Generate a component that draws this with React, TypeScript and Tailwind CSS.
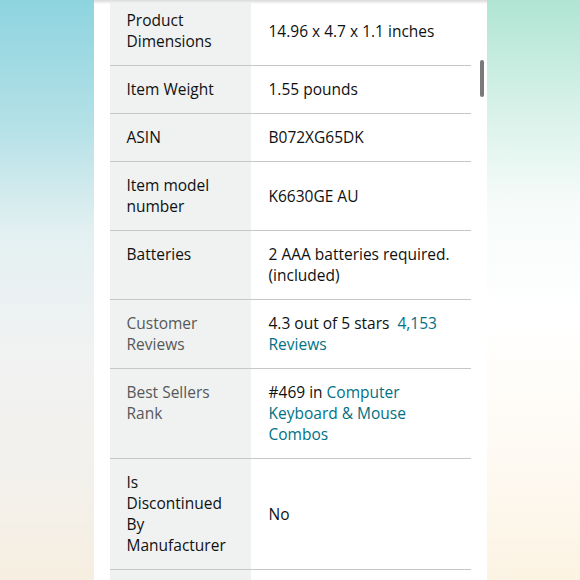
import React from "react";

type Row = {
  label: string[];
  muted?: boolean;
  value: React.ReactNode;
};

const link = "text-[#007185]";

const rows: Row[] = [
  { label: ["Product", "Dimensions"], value: "14.96 x 4.7 x 1.1 inches" },
  { label: ["Item Weight"], value: "1.55 pounds" },
  { label: ["ASIN"], value: "B072XG65DK" },
  { label: ["Item model", "number"], value: "K6630GE AU" },
  {
    label: ["Batteries"],
    value: (
      <>
        2 AAA batteries required.
        <br />
        (included)
      </>
    ),
  },
  {
    label: ["Customer", "Reviews"],
    muted: true,
    value: (
      <>
        4.3 out of 5 stars&nbsp;&nbsp;<span className={link}>4,153</span>
        <br />
        <span className={link}>Reviews</span>
      </>
    ),
  },
  {
    label: ["Best Sellers", "Rank"],
    muted: true,
    value: (
      <>
        #469 in <span className={link}>Computer</span>
        <br />
        <span className={link}>Keyboard &amp; Mouse</span>
        <br />
        <span className={link}>Combos</span>
      </>
    ),
  },
  { label: ["Is", "Discontinued", "By", "Manufacturer"], value: "No" },
];

const App = () => {
  return (
    <div className="w-[580px] h-[580px] overflow-hidden flex font-['Open_Sans',sans-serif] text-[15.5px] leading-[21px] text-[#0f1111]">
      {/* blurred backdrop, left */}
      <div className="flex-1 bg-[linear-gradient(to_bottom,#8dd4df_0%,#b5e1e7_22%,#e3f0f1_40%,#f1f2f2_60%,#f3f1ed_82%,#f6eee0_100%)]" />

      {/* page */}
      <div className="relative w-[393px] bg-white px-4 overflow-hidden">
        <div className="absolute inset-x-0 top-0 h-[4px] bg-[linear-gradient(to_bottom,#d9dada,#eeeeee_60%,#ffffff00)] z-10" />
        <div className="absolute right-[3px] top-[60px] w-[4px] h-[37px] rounded-sm bg-[#7a7a7a]" />

        <div className="-mt-[3px]">
          {rows.map((r, i) => (
            <div key={i} className="flex border-b border-[#c5c7c8]">
              <div
                className={
                  "w-[141px] shrink-0 bg-[#f0f1f1] pl-[17px] pr-2 py-[13px] " +
                  (r.muted ? "text-[#565959]" : "")
                }
              >
                {r.label.map((l, j) => (
                  <div key={j}>{l}</div>
                ))}
              </div>
              <div className="flex-1 pl-[18px] pr-2 py-[13px] self-center">{r.value}</div>
            </div>
          ))}
          <div className="flex h-[40px]">
            <div className="w-[141px] bg-[#f0f1f1]" />
          </div>
        </div>
      </div>

      {/* blurred backdrop, right */}
      <div className="flex-1 bg-[linear-gradient(to_bottom,#b0e5d3_0%,#d6f1e8_18%,#f6fbf9_35%,#ffffff_55%,#fefaf3_78%,#fcf3e3_100%)]" />
    </div>
  );
};

export default App;
